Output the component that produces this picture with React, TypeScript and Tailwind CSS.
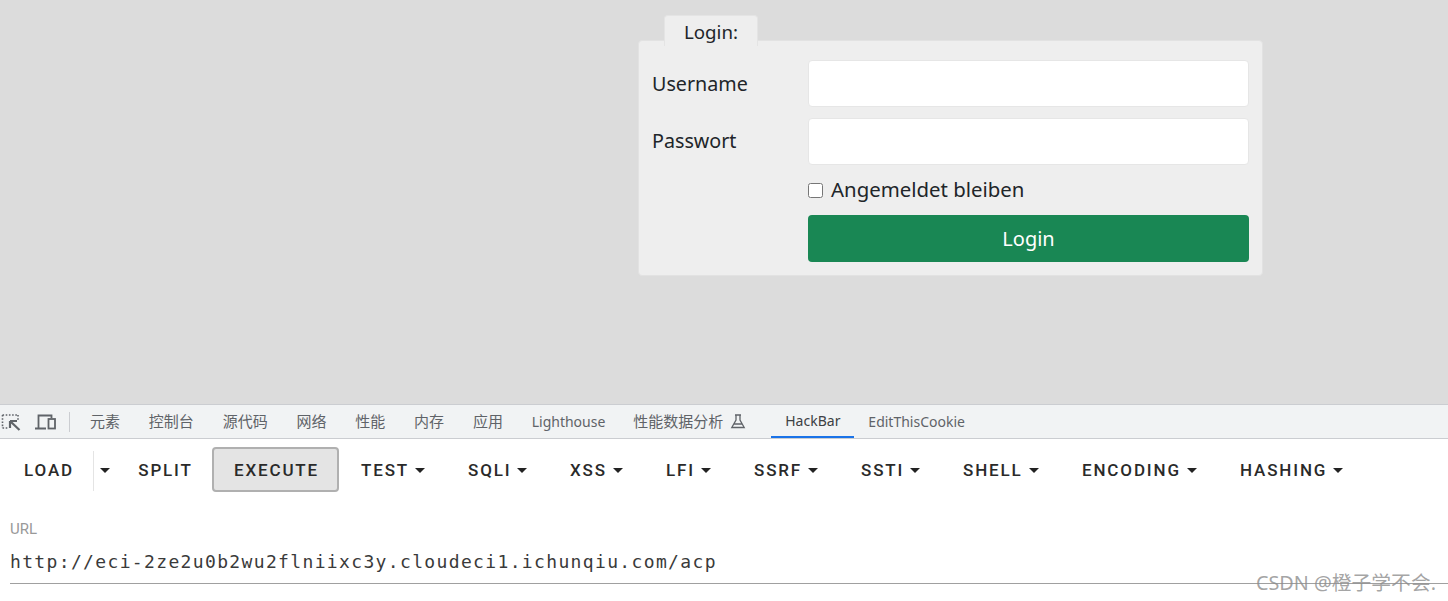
const devTabs = [
  { label: '元素', cls: 'text-[15px]' },
  { label: '控制台', cls: 'text-[15px]' },
  { label: '源代码', cls: 'text-[15px]' },
  { label: '网络', cls: 'text-[15px]' },
  { label: '性能', cls: 'text-[15px]' },
  { label: '内存', cls: 'text-[15px]' },
  { label: '应用', cls: 'text-[15px]' },
  { label: 'Lighthouse', cls: 'text-[14px]' },
]
const menus = [
  { label: 'TEST', w: 'w-[107px]' },
  { label: 'SQLI', w: 'w-[102px]' },
  { label: 'XSS', w: 'w-[96px]' },
  { label: 'LFI', w: 'w-[88px]' },
  { label: 'SSRF', w: 'w-[107px]' },
  { label: 'SSTI', w: 'w-[102px]' },
  { label: 'SHELL', w: 'w-[119px]' },
  { label: 'ENCODING', w: 'w-[158px]' },
  { label: 'HASHING', w: 'w-[147px]' },
]

function Caret() {
  return <span className="ml-[6px] inline-block h-0 w-0 border-x-[5px] border-t-[5px] border-x-transparent border-t-[#222]" />
}

function InspectIcon() {
  return (
    <svg width="20" height="18" viewBox="0 0 20 18" fill="none" stroke="#5f6368">
      <path d="M1.5 2h15M1.5 2v13M1.5 15h5M17 2v5" strokeWidth="1.6" strokeDasharray="1.6 1.6" />
      <path d="M9 8h7M9 8v7M9.5 8.5l9 8.5" strokeWidth="2.2" />
    </svg>
  )
}

function DeviceIcon() {
  return (
    <svg width="22" height="18" viewBox="0 0 22 18" fill="none" stroke="#5f6368" strokeWidth="1.8">
      <path d="M0 15.5h11M3.5 15V2.5h13V5" />
      <rect x="13.5" y="6" width="6.5" height="9.5" />
    </svg>
  )
}

function FlaskIcon() {
  return (
    <svg width="16" height="15" viewBox="0 0 16 15" fill="none" stroke="#5f6368" strokeWidth="1.3">
      <path d="M5 1h6M6 1v5L1.8 13.5h12.4L10 6V1M4 10h8" />
    </svg>
  )
}

export default function App() {
  return (
    <div className="relative h-[601px] w-[1448px] overflow-hidden bg-white font-['Noto_Sans','Noto_Sans_CJK_SC',sans-serif] text-[#212529]">
      <div className="h-[404px] bg-[#dcdcdc] pl-[638px] pt-[15px]">
        <div className="relative z-10 ml-[26px] -mb-[6px] flex h-[31px] w-[94px] items-center justify-center rounded-t border border-b-0 border-[#e4e4e4] bg-[#eeeeee] pt-[3px] text-[18.7px]">
          Login:
        </div>
        <div className="h-[236px] w-[625px] rounded border border-[#e2e2e2] bg-[#eeeeee] pl-[13px] pr-[13px] pt-[19px]">
          <div className="flex h-[47px] items-center">
            <label className="w-[156px] pt-[1px] text-[19.7px]">Username</label>
            <input className="h-[47px] w-[441px] rounded border border-[#e6e6e6] bg-white" />
          </div>
          <div className="mt-[11px] flex h-[47px] items-center">
            <label className="w-[156px] pb-[2px] text-[19.7px]">Passwort</label>
            <input className="h-[47px] w-[441px] rounded border border-[#e6e6e6] bg-white" />
          </div>
          <label className="ml-[156px] mt-[10px] flex h-[30px] items-center text-[20.4px]">
            <input type="checkbox" className="m-0 h-[15px] w-[15px]" />
            <span className="ml-[8px] pb-[2px]">Angemeldet bleiben</span>
          </label>
          <button className="ml-[156px] mt-[10px] h-[47px] w-[441px] rounded bg-[#198754] text-[20px] text-white">Login</button>
        </div>
      </div>

      <div className="flex h-[35px] items-center border-y border-[#cbcdd1] bg-[#f1f3f4] text-[14px] text-[#5f6368]">
        <div className="ml-[1px] flex w-[34px] justify-start"><InspectIcon /></div>
        <DeviceIcon />
        <div className="ml-[12px] h-[20px] w-px bg-[#cbcdd1]" />
        <div className="ml-[20px] flex items-center gap-[28.8px]">
          {devTabs.map((t) => (
            <span key={t.label} className={t.cls}>{t.label}</span>
          ))}
        </div>
        <span className="ml-[28px] flex items-center gap-[7px] text-[15px]">性能数据分析 <FlaskIcon /></span>
        <span className="ml-[25px] flex h-[33px] w-[83px] items-center justify-center border-b-2 border-[#1a73e8] text-[#3c4043]">HackBar</span>
        <span className="ml-[14px]">EditThisCookie</span>
      </div>

      <div className="flex h-[60px] items-center pl-[3px] pt-[3px] font-['Roboto',sans-serif] text-[17px] font-medium tracking-[1.85px] text-[#2a2a2a]">
        <span className="flex h-[40px] w-[91px] items-center justify-center border-r border-[#e4e4e4] pl-[2px]">LOAD</span>
        <span className="flex w-[19px] justify-center pr-[4px]"><Caret /></span>
        <span className="flex w-[99px] justify-center pl-[6px]">SPLIT</span>
        <button className="-mt-[3px] flex h-[45px] w-[127px] items-center justify-center rounded border-2 border-[#b0b0b0] bg-[#e4e4e4] pl-[2px] pt-[3px] tracking-[1.85px]">EXECUTE</button>
        <div className="flex">
          {menus.map((m) => (
            <span key={m.label} className={`flex items-center justify-start pl-[22px] ${m.w}`}>
              {m.label}
              <Caret />
            </span>
          ))}
        </div>
      </div>

      <div className="pl-[10px] pt-[22px] font-['Roboto',sans-serif]">
        <div className="text-[15px] leading-[16px] text-[#999]">URL</div>
        <div className="mt-[11px] border-b border-[#a0a0a0] pb-[7px] font-['DejaVu_Sans_Mono',monospace] text-[18px] leading-[28px] tracking-[1.35px] text-[#3a3a3a]">
          http://eci-2ze2u0b2wu2flniixc3y.cloudeci1.ichunqiu.com/acp
        </div>
      </div>

      <div className="absolute left-[1256px] top-[570px] text-[19.8px] leading-[26px] text-[#8c8c8c]/80">
        CSDN @橙子学不会.
      </div>
    </div>
  )
}
